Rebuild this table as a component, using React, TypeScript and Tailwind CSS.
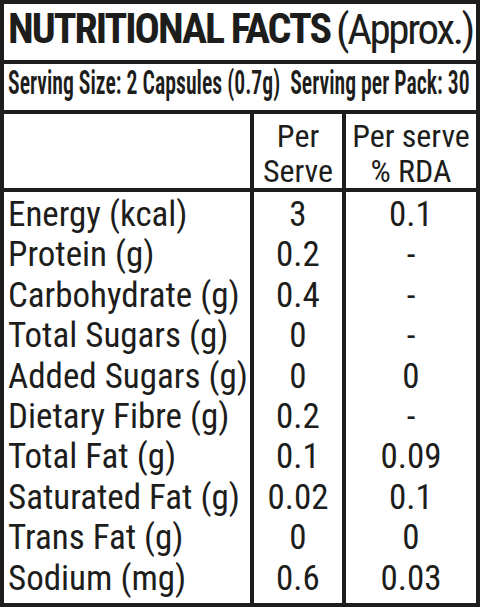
const rows = [
  { name: "Energy (kcal)", serve: "3", rda: "0.1" },
  { name: "Protein (g)", serve: "0.2", rda: "-" },
  { name: "Carbohydrate (g)", serve: "0.4", rda: "-" },
  { name: "Total Sugars (g)", serve: "0", rda: "-" },
  { name: "Added Sugars (g)", serve: "0", rda: "0" },
  { name: "Dietary Fibre (g)", serve: "0.2", rda: "-" },
  { name: "Total Fat (g)", serve: "0.1", rda: "0.09" },
  { name: "Saturated Fat (g)", serve: "0.02", rda: "0.1" },
  { name: "Trans Fat (g)", serve: "0", rda: "0" },
  { name: "Sodium (mg)", serve: "0.6", rda: "0.03" },
];

export default function App() {
  return (
    <div className="w-[480px] h-[610px] bg-white font-['Roboto_Condensed',Roboto,sans-serif] text-[#1d1d1b]">
      <div className="h-[607px] border-4 border-[#1d1d1b] flex flex-col">
        <div className="h-[60px] border-b-4 border-[#1d1d1b] pl-[4px] pt-[4px] flex items-start whitespace-nowrap overflow-hidden">
          <span className="text-[42px] leading-[42px] font-bold tracking-[-2px]">NUTRITIONAL FACTS</span>
          <span className="text-[43px] leading-[42px] ml-[6px] tracking-[-2.4px]">(Approx.)</span>
        </div>

        <div className="h-[50px] border-b-4 border-[#1d1d1b] pl-[4px] pt-[2px] overflow-hidden">
          <div className="text-[34px] leading-[33px] font-semibold whitespace-nowrap origin-left scale-x-[0.64]">
            Serving Size: 2 Capsules (0.7g)&nbsp; Serving per Pack: 30
          </div>
        </div>

        <div className="h-[78px] border-b-4 border-[#1d1d1b] grid grid-cols-[246px_92px_1fr] text-[32px] leading-[35px]">
          <div></div>
          <div className="border-l-4 border-[#1d1d1b] pt-[5px] text-center">
            Per
            <br />
            Serve
          </div>
          <div className="border-l-4 border-[#1d1d1b] pt-[5px] text-center whitespace-nowrap">
            Per serve
            <br />% RDA
          </div>
        </div>

        <div className="flex-1 grid grid-cols-[246px_92px_1fr] text-[35px] leading-[40.4px] pt-[3px]">
          <div className="pl-[4px] whitespace-nowrap">
            {rows.map((r) => (
              <div key={r.name}>{r.name}</div>
            ))}
          </div>
          <div className="border-l-4 border-[#1d1d1b] -mt-[3px] pt-[3px] text-center">
            {rows.map((r) => (
              <div key={r.name}>{r.serve}</div>
            ))}
          </div>
          <div className="border-l-4 border-[#1d1d1b] -mt-[3px] pt-[3px] text-center">
            {rows.map((r) => (
              <div key={r.name}>{r.rda}</div>
            ))}
          </div>
        </div>
      </div>
    </div>
  );
}
